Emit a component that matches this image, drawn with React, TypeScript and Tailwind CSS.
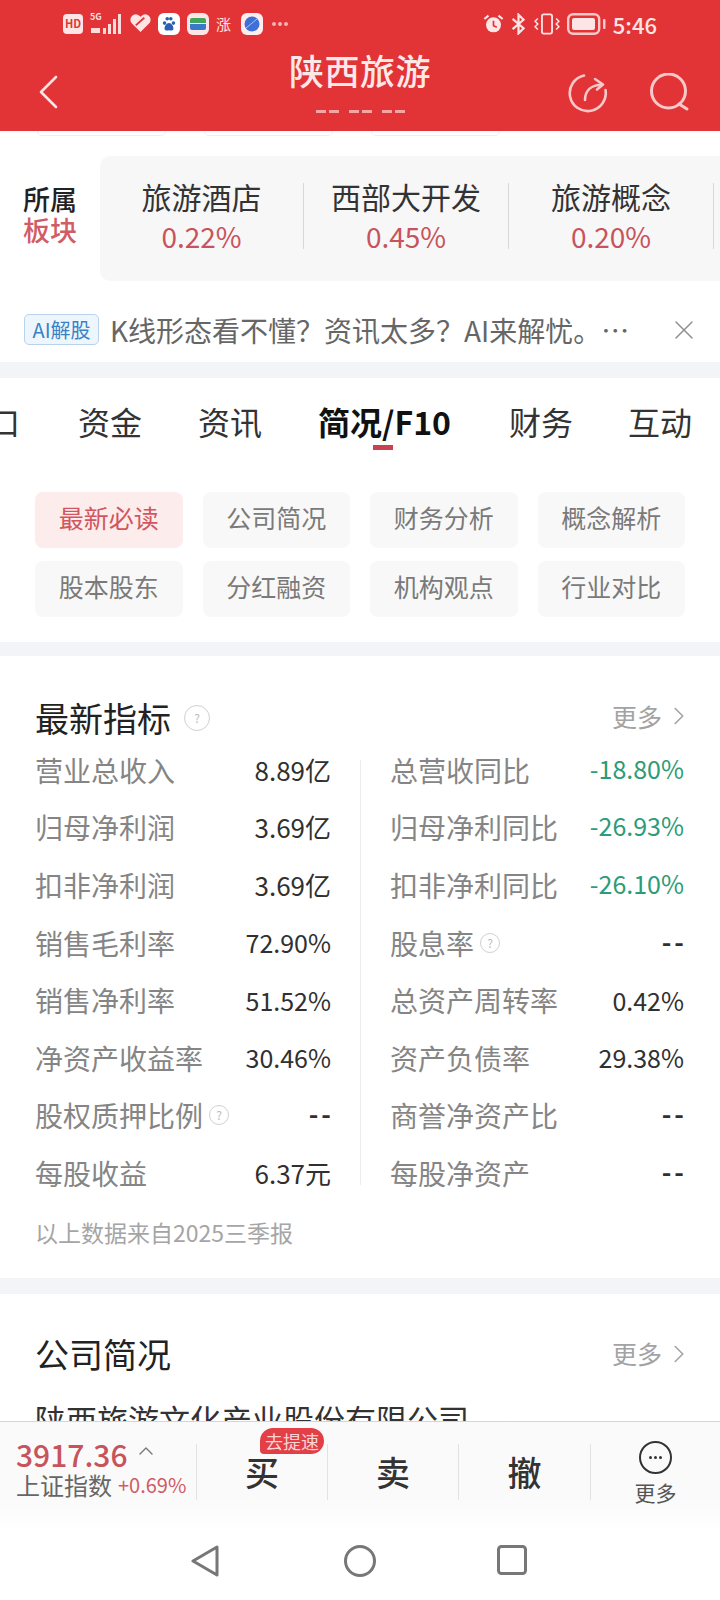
import React from "react";
import { ChevronRight, ChevronUp, X } from "lucide-react";

const FONT = "font-['Noto_Sans_CJK_SC','Noto_Sans','Liberation_Sans',sans-serif]";

function Q({ s = 20 }: { s?: number }) {
  return (
    <span
      className="inline-flex items-center justify-center rounded-full border border-[#d0d0d0] text-[#bcbcbc] text-[12px] leading-none"
      style={{ width: s, height: s }}
    >
      ?
    </span>
  );
}

const left: [React.ReactNode, string][] = [
  ["营业总收入", "8.89亿"],
  ["归母净利润", "3.69亿"],
  ["扣非净利润", "3.69亿"],
  ["销售毛利率", "72.90%"],
  ["销售净利率", "51.52%"],
  ["净资产收益率", "30.46%"],
  [<span className="flex items-center gap-[6px]">股权质押比例<Q /></span>, "--"],
  ["每股收益", "6.37元"],
];
const right: [React.ReactNode, string, boolean][] = [
  ["总营收同比", "-18.80%", true],
  ["归母净利同比", "-26.93%", true],
  ["扣非净利同比", "-26.10%", true],
  [<span className="flex items-center gap-[6px]">股息率<Q /></span>, "--", false],
  ["总资产周转率", "0.42%", false],
  ["资产负债率", "29.38%", false],
  ["商誉净资产比", "--", false],
  ["每股净资产", "--", false],
];

function Row({ label, value, green }: { label: React.ReactNode; value: string; green?: boolean }) {
  const dash = value === "--";
  const unit = value.endsWith("亿") || value.endsWith("元");
  return (
    <div className="h-[57.6px] flex items-center justify-between pb-[4px]">
      <span className="text-[28px] text-[#858585] leading-none">{label}</span>
      <span
        className={`leading-none ${green ? "text-[#2c9c78] mb-[3px]" : "text-[#303030]"} ${
          dash ? "text-[26px] font-bold tracking-[3px] mr-[-3px] mb-[4px]" : unit ? "text-[26px]" : "text-[25px]"
        }`}
      >
        {value}
      </span>
    </div>
  );
}

function More({ up }: { up?: boolean }) {
  return (
    <div className={`flex items-center text-[#a3a3a3] text-[25px] leading-none mr-[-10px] ${up ? "mb-[4px]" : ""}`}>
      更多
      <ChevronRight className="ml-[2px]" size={30} strokeWidth={1.3} />
    </div>
  );
}

export default function App() {
  return (
    <div className={`${FONT} w-[720px] h-[1600px] bg-white overflow-hidden flex flex-col relative`}>
      {/* header */}
      <div className="h-[131px] shrink-0 bg-[#e23336] text-white relative">
        <div className="h-[48px] flex items-center justify-between pl-[63px] pr-[63px] pb-[1px]">
          <div className="flex items-center gap-[7px]">
            <span className="w-[20px] h-[20px] rounded-[4px] bg-[#fde5e5] text-[#e23336] text-[11px] font-bold flex items-center justify-center leading-none">HD</span>
            <span className="relative w-[33px] h-[22px] block">
              <span className="absolute left-0 top-[-1px] text-[9px] font-bold leading-none text-[#fbdcdc]">5G</span>
              <svg className="absolute left-0 top-0" width="33" height="22" viewBox="0 0 33 22" fill="#fbdcdc">
                <rect x="1" y="15" width="9" height="5" />
                <rect x="13" y="15" width="3" height="6" /><rect x="18" y="11" width="3" height="10" /><rect x="23" y="6" width="3" height="15" /><rect x="28" y="1" width="3" height="20" />
              </svg>
            </span>
            <svg width="21" height="19" viewBox="0 0 22 20" fill="#fde5e5"><path d="M11 19 2 10a5.5 5.5 0 0 1 8-8l1 1 1-1a5.5 5.5 0 0 1 8 8z" /><path d="M6 12 15 4" stroke="#e23336" strokeWidth="2" /></svg>
            <span className="w-[22px] h-[22px] rounded-[6px] bg-white flex items-center justify-center">
              <svg width="16" height="16" viewBox="0 0 16 18" fill="#2b5fb0"><circle cx="3" cy="8" r="2" /><circle cx="6" cy="3" r="2" /><circle cx="10" cy="3" r="2" /><circle cx="13" cy="8" r="2" /><path d="M8 8c-3 0-5 4-5 6s2 3 5 2c3 1 5 0 5-2s-2-6-5-6z" /></svg>
            </span>
            <span className="w-[22px] h-[22px] rounded-[6px] bg-[#fde5e5] flex flex-col justify-center gap-[1px] px-[3px]">
              <span className="h-[5px] bg-[#43a55c] rounded-t-[2px]" />
              <span className="h-[6px] bg-[#3a78c9] rounded-b-[2px]" />
            </span>
            <span className="w-[18px] text-[15px] leading-none text-[#fde5e5]">涨</span>
            <span className="w-[22px] h-[22px] rounded-[6px] bg-[#fdeeee] flex items-center justify-center">
              <svg width="16" height="16" viewBox="0 0 16 16"><circle cx="8" cy="8" r="7.5" fill="#3f6fd8" /><path d="M2 12 13 3" stroke="#a9c1f2" strokeWidth="1" /></svg>
            </span>
            <span className="flex gap-[2px] ml-[2px]">
              <span className="w-[4px] h-[4px] rounded-full bg-[#f5b5b5]" />
              <span className="w-[4px] h-[4px] rounded-full bg-[#f5b5b5]" />
              <span className="w-[4px] h-[4px] rounded-full bg-[#f5b5b5]" />
            </span>
          </div>
          <div className="flex items-center gap-[6px]">
            <svg width="21" height="20" viewBox="0 0 24 24" fill="#fde5e5"><circle cx="12" cy="13" r="9" /><path d="M12 8v6l4 2" stroke="#e23336" strokeWidth="2" fill="none" /><path d="M1 6 6 2M23 6l-5-4" stroke="#fde5e5" strokeWidth="2.5" /></svg>
            <svg width="17" height="22" viewBox="0 0 20 26" fill="none" stroke="#fde5e5" strokeWidth="2.6"><path d="M3 7 16 18 10 24V2l6 6L3 19" /></svg>
            <svg width="28" height="22" viewBox="0 0 30 24" fill="none" stroke="#fde5e5" strokeWidth="2"><rect x="9.5" y="1.5" width="11" height="21" rx="2" /><path d="M5 6 2 9l3 3-3 3 3 3M25 6l3 3-3 3 3 3-3 3" strokeWidth="1.6" /></svg>
            <svg width="40" height="22" viewBox="0 0 40 22" fill="none"><rect x="1.2" y="1.2" width="31" height="19.6" rx="5" stroke="#f9c9c9" strokeWidth="2.4" /><rect x="5" y="5" width="23" height="12" rx="2" fill="#fde5e5" /><rect x="36" y="6" width="2.5" height="10" rx="1" fill="#f9c9c9" /></svg>
            <span className="text-[22px] leading-none text-[#fde5e5] font-medium">5:46</span>
          </div>
        </div>
        <div className="flex flex-col items-center mt-[1px]">
          <span className="text-[35px] leading-[42px] font-medium text-[#fde8e8] tracking-[0.5px]">陕西旅游</span>
          <div className="flex gap-[10px] mt-[19px]">
            {[0, 1, 2].map((i) => (
              <span key={i} className="flex gap-[3px]">
                <span className="w-[10px] h-[3px] bg-[#f5a5a5]" />
                <span className="w-[10px] h-[3px] bg-[#f5a5a5]" />
              </span>
            ))}
          </div>
        </div>
        <svg className="absolute left-[38px] top-[75px]" width="21" height="34" viewBox="0 0 21 34" fill="none" stroke="#fde5e5" strokeWidth="2.6" strokeLinecap="round" strokeLinejoin="round">
          <path d="M18 2 3 17l15 15" />
        </svg>
        <svg className="absolute left-[568px] top-[73px]" width="40" height="40" viewBox="0 0 40 40" fill="none" stroke="#f9c9c9" strokeWidth="2.6" strokeLinecap="round" strokeLinejoin="round">
          <path d="M16 2.5A18 18 0 1 0 37.5 17" />
          <path d="M17 27c0-9 6-15 17-15.500M27 6l8 5.500-6 5" />
        </svg>
        <svg className="absolute left-[650px] top-[73px]" width="40" height="40" viewBox="0 0 40 40" fill="none" stroke="#f9c9c9" strokeWidth="3" strokeLinecap="round">
          <circle cx="18.500" cy="18" r="17" /><path d="M29 31l8 5" />
        </svg>
      </div>

      {/* sector card */}
      <div className="h-[12px] shrink-0 flex gap-[38px] px-[37px]">
        {[0, 1, 2].map((i) => (
          <span key={i} className="w-[129px] h-[5px] rounded-b-[12px] border-b border-x border-[#f3eeee]" />
        ))}
      </div>
      <div className="shrink-0 h-[162px] pt-[13px] flex">
        <div className="w-[100px] shrink-0 pt-[27px] pl-[23px] text-[27px] leading-[31px] font-medium">
          <div className="text-[#222]">所属</div>
          <div className="text-[#d15c66]">板块</div>
        </div>
        <div className="flex-1 h-[125px] bg-[#f7f7f7] rounded-l-[10px] flex items-center pb-[6px]">
          {[
            ["旅游酒店", "0.22%", 204],
            ["西部大开发", "0.45%", 205],
            ["旅游概念", "0.20%", 205],
          ].map(([n, v, w], i) => (
            <div key={i} className="flex flex-col items-center justify-center h-[66px] border-r border-[#d8d8d8] shrink-0" style={{ width: w as number }}>
              <span className="shrink-0 text-[30px] leading-[36px] text-[#333]">{n}</span>
              <span className="shrink-0 mt-[4px] text-[28px] leading-[36px] text-[#c9535c]">{v}</span>
            </div>
          ))}
        </div>
      </div>

      {/* AI */}
      <div className="shrink-0 h-[49px] flex items-center pl-[24px] pr-[20px]">
        <span className="w-[75px] h-[31px] border border-[#b9d3ea] bg-[#eef6fd] rounded-[5px] text-[#3b82c4] text-[20px] flex items-center justify-center leading-none">AI解股</span>
        <span className="ml-[11px] text-[28px] leading-none text-[#666] whitespace-nowrap">K线形态看不懂？资讯太多？AI来解忧。…</span>
        <X className="ml-auto text-[#8f8f8f]" size={32} strokeWidth={1.1} />
      </div>
      <div className="h-[16px] mt-[8px] shrink-0 bg-[#f2f4f7]" />

      {/* tabs */}
      <div className="shrink-0 h-[86px] flex items-center text-[32px] text-[#333] leading-none">
        <span className="w-[20px] overflow-hidden whitespace-nowrap flex justify-end">口</span>
        <span className="ml-[58px]">资金</span>
        <span className="ml-[56px]">资讯</span>
        <span className="ml-[56px] font-bold text-[#111] relative">
          简况/F10
          <span className="absolute left-[55px] top-[40px] w-[20px] h-[5px] bg-[#c8434e]" />
        </span>
        <span className="ml-[58px]">财务</span>
        <span className="ml-[55px]">互动</span>
      </div>

      {/* chips */}
      <div className="shrink-0 pl-[35px] pr-[35px] pt-[28px] grid grid-cols-4 gap-x-[20px] gap-y-[13px]">
        {["最新必读", "公司简况", "财务分析", "概念解析", "股本股东", "分红融资", "机构观点", "行业对比"].map((t, i) => (
          <div key={t} className={`h-[56px] pb-[5px] rounded-[8px] flex items-center justify-center text-[25px] leading-none ${i === 0 ? "bg-[#fdecec] text-[#d0565f]" : "bg-[#f8f8f8] text-[#7a7a7a]"}`}>
            {t}
          </div>
        ))}
      </div>
      <div className="h-[14px] mt-[25px] shrink-0 bg-[#f2f4f7]" />

      {/* metrics */}
      <div className="shrink-0 pl-[35px] pr-[36px] pt-[42px]">
        <div className="flex items-center justify-between h-[40px]">
          <div className="flex items-center gap-[13px]">
            <span className="text-[34px] leading-none text-[#222]">最新指标</span>
            <Q s={26} />
          </div>
          <More up />
        </div>
        <div className="flex mt-[5px]">
          <div className="w-[296px] shrink-0">
            {left.map(([l, v], i) => <Row key={i} label={l} value={v} />)}
          </div>
          <div className="ml-[29px] w-px bg-[#ececec] mt-[17px] mb-[19px]" />
          <div className="ml-[29px] flex-1">
            {right.map(([l, v, g], i) => <Row key={i} label={l} value={v} green={g} />)}
          </div>
        </div>
        <div className="text-[23px] leading-none text-[#a5a5a5] mt-[17px]">以上数据来自2025三季报</div>
      </div>
      <div className="h-[16px] mt-[34px] shrink-0 bg-[#f2f4f7]" />

      {/* company */}
      <div className="shrink-0 pl-[35px] pr-[36px] pt-[40px]">
        <div className="flex items-center justify-between h-[40px]">
          <span className="text-[34px] leading-none text-[#222]">公司简况</span>
          <More />
        </div>
        <div className="text-[31px] leading-none text-[#333] mt-[29px] whitespace-nowrap">陕西旅游文化产业股份有限公司</div>
      </div>

      {/* bottom bar */}
      <div className="absolute left-0 right-0 top-[1421px] bottom-0 bg-white border-t border-[#d5d5d5] flex flex-col">
        <div className="h-[110px] flex relative bg-linear-to-b from-[#fafafa] from-70% to-white">
          <div className="w-[196px] shrink-0 pl-[16px] pt-[15px]">
            <div className="flex items-center">
              <span className="text-[30px] leading-[34px] font-medium text-[#c9535c]">3917.36</span>
              <ChevronUp className="ml-[6px] mb-[6px] text-[#777]" size={24} strokeWidth={1.4} />
            </div>
            <div className="flex items-center mt-[2px] leading-none whitespace-nowrap">
              <span className="text-[24px] text-[#666]">上证指数</span>
              <span className="text-[20px] text-[#d15c66] ml-[6px]">+0.69%</span>
            </div>
          </div>
          {["买", "卖", "撤"].map((t, i) => (
            <div key={t} className={`${i === 2 ? "w-[132px]" : "w-[131px]"} shrink-0 mt-[22px] mb-[32px] border-l border-[#e2e2e2] flex items-center justify-center text-[34px] font-medium text-[#333] leading-none`}>
              {t}
            </div>
          ))}
          <div className="flex-1 mt-[22px] mb-[32px] border-l border-[#e2e2e2] flex flex-col items-center justify-center">
            <span className="shrink-0 w-[33px] h-[33px] rounded-full border-[2.500px] border-[#333] flex items-center justify-center gap-[2px]">
              <span className="w-[3px] h-[3px] rounded-full bg-[#333]" />
              <span className="w-[3px] h-[3px] rounded-full bg-[#333]" />
              <span className="w-[3px] h-[3px] rounded-full bg-[#333]" />
            </span>
            <span className="shrink-0 text-[21px] leading-none text-[#555] mt-[8px]">更多</span>
          </div>
          <span className="absolute left-[260px] top-[6px] w-[64px] h-[26px] bg-[#e23f47] rounded-t-[13px] rounded-br-[13px] rounded-bl-[4px] text-[#fbd5d5] text-[18px] flex items-center justify-center leading-none">去提速</span>
        </div>
        <div className="flex-1 flex items-start pl-[191px] pt-[13px]">
          <svg width="28" height="32" viewBox="0 0 28 32" fill="none" stroke="#777" strokeWidth="3" strokeLinejoin="round"><path d="M26 2v28L2 16z" /></svg>
          <svg className="ml-[125px]" width="32" height="32" viewBox="0 0 32 32" fill="none" stroke="#777" strokeWidth="3"><circle cx="16" cy="16" r="14.500" /></svg>
          <svg className="ml-[121px]" width="30" height="30" viewBox="0 0 30 30" fill="none" stroke="#777" strokeWidth="3"><rect x="1.500" y="1.500" width="27" height="27" rx="3" /></svg>
        </div>
      </div>
    </div>
  );
}
